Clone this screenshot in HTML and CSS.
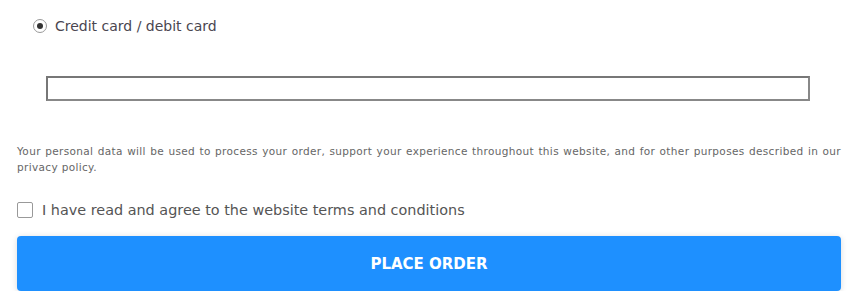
FILE: index.html
```html
<!DOCTYPE html>
<html lang="en">
<head>
  <meta charset="UTF-8" />
  <title>Checkout</title>
  <link rel="stylesheet" href="styles.css">
</head>
<body>
  <div id="payment">
    <label class="method">
      <span class="radio"><span class="dot"></span></span>
      <span class="method-name">Credit card / debit card</span>
    </label>

    <div class="card-box">
      <div class="card-field"></div>
    </div>
  </div>

  <p class="privacy">Your personal data will be used to process your order, support your experience throughout this website, and for other purposes described in our privacy policy.</p>

  <label class="terms">
    <span class="check"></span>
    <span>I have read and agree to the website terms and conditions</span>
  </label>

  <button class="place-order">PLACE ORDER</button>
</body>
</html>
```

FILE: styles.css
```css
* { box-sizing: border-box; }
body {
  margin: 0;
  padding: 0 13px 0 17px;
  font-family: "DejaVu Sans", sans-serif;
  color: #555;
  background: #fff;
}

/* ===== Metoda płatności ===== */
#payment { padding: 17px 0 0 16px; }
.method { display: flex; align-items: center; gap: 8px; height: 18px; }
.radio {
  width: 14px; height: 14px; border-radius: 50%;
  border: 1px solid #999; background: #fff;
  display: flex; align-items: center; justify-content: center;
}
.dot { width: 6px; height: 6px; border-radius: 50%; background: #333; }
.method-name { font-size: 14px; color: #4a4650; }

.card-box { padding: 41px 31px 0 13px; }
.card-field {
  height: 25px;
  border: 2px solid #777;
  border-right-color: #888;
  border-bottom-color: #888;
  background: #fff;
}

/* ===== Dane osobowe ===== */
.privacy {
  margin: 42px 0 0;
  font-size: 10.5px;
  letter-spacing: 0.35px;
  line-height: 16px;
  color: #666;
  text-align: justify;
}

.terms { display: flex; align-items: center; gap: 9px; margin-top: 27px; font-size: 14.4px; color: #555; }
.check { width: 16px; height: 16px; border: 1px solid #999; border-radius: 2px; background: #fff; }

.place-order {
  display: block; width: 100%;
  margin-top: 18px;
  height: 55px;
  border: none; border-radius: 4px;
  background: #1e90ff;
  color: #fff;
  font-family: inherit; font-weight: bold; font-size: 15px;
  box-shadow: 0 1px 6px rgba(0,0,0,.15);
  cursor: pointer;
}
```
